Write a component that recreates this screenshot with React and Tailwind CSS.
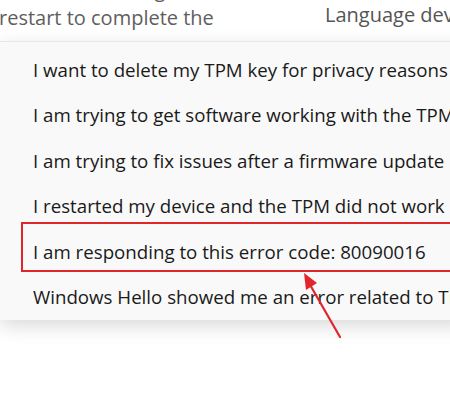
const rows = [
  "I want to delete my TPM key for privacy reasons",
  "I am trying to get software working with the TPM",
  "I am trying to fix issues after a firmware update",
  "I restarted my device and the TPM did not work",
  "I am responding to this error code: 80090016",
  "Windows Hello showed me an error related to TPM",
];

export default function App() {
  return (
    <div className="relative h-[400px] w-[450px] overflow-hidden bg-white font-['Open_Sans',sans-serif]">
      <div className="flex h-[41px] items-start overflow-hidden whitespace-nowrap text-[20px] text-[#5e5e5e]">
        <div className="-mt-[24px] flex w-[325px] shrink-0 flex-col leading-[28px]">
          <div className="pl-[82px]">installing</div>
          <div className="-ml-[1px]">restart to complete the</div>
        </div>
        <div className="mt-[1px] leading-[28px] text-[#555555]">Language device</div>
      </div>
      <div className="w-[470px] border-t border-[#e6e6e6] bg-[#f9f9f9] pb-[1px] pt-[5px] shadow-[0_6px_18px_rgba(0,0,0,0.15)]">
        <ul className="flex flex-col whitespace-nowrap pl-[33px] text-[18.7px] leading-[45.4px] text-[#1a1a1a]">
          {rows.map((r) => (
            <li key={r}>{r}</li>
          ))}
        </ul>
      </div>
      <div className="absolute left-[21px] top-[222px] h-[50px] w-[450px] border-2 border-[#e0262b]" />
      <svg className="absolute left-0 top-0" width="450" height="400" viewBox="0 0 450 400">
        <line x1="340" y1="337" x2="309" y2="283" stroke="#e0262b" strokeWidth="2.2" strokeLinecap="round" />
        <polygon points="304,273 317,283 306,290" fill="#e0262b" />
      </svg>
    </div>
  );
}
